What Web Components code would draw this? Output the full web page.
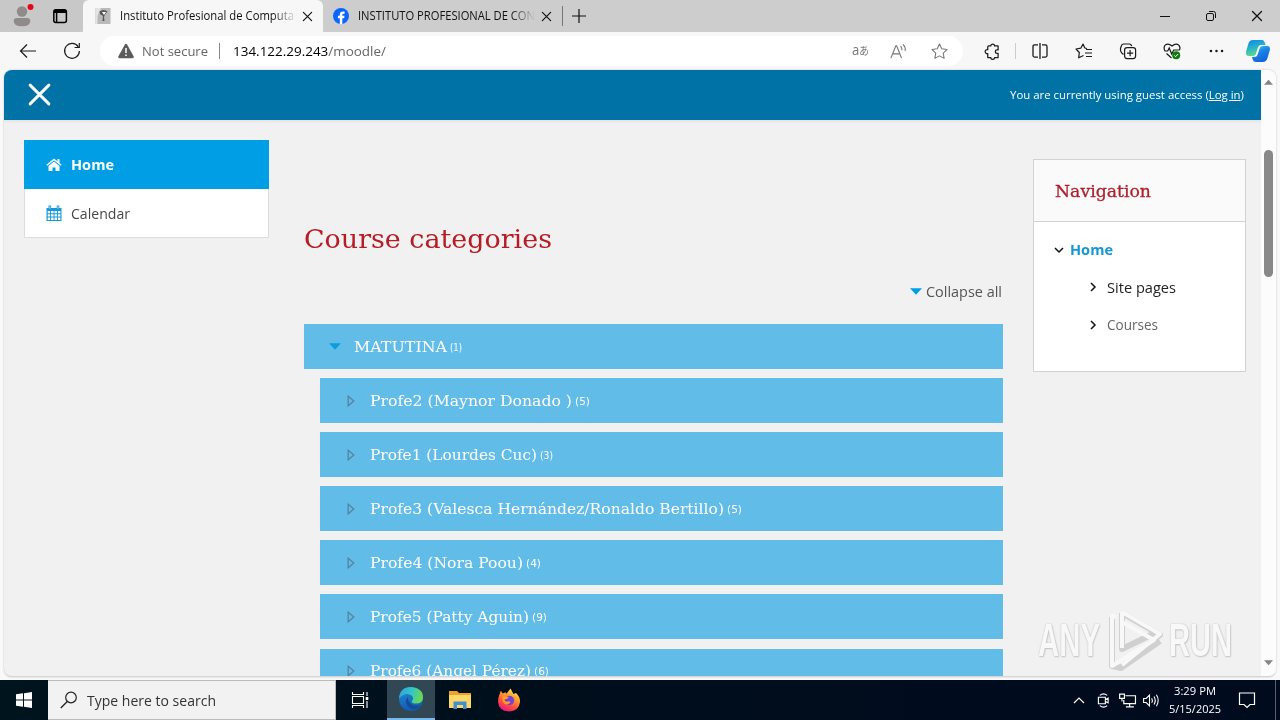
<!DOCTYPE html>
<html lang="en">
<head>
<meta charset="utf-8">
<title>Instituto Profesional de Computación</title>
<style>
html,body{margin:0;width:1280px;height:720px;overflow:hidden;background:#f7f7f7}
body{font-family:"Open Sans","Noto Sans",sans-serif;color:#222}
</style>
</head>
<body>
<desktop-screen></desktop-screen>
<script>
const ICONS = {
  back:['0 0 20 20','<path d="M18 10H3M9 3.5 2.5 10 9 16.5" fill="none" stroke="currentColor" stroke-width="1.2"/>'],
  reload:['0 0 20 20','<path d="M16.2 5.8A7.4 7.4 0 1 0 17.4 10M17.3 2v4.5h-4.7" fill="none" stroke="currentColor" stroke-width="1.2"/>'],
  warn:['0 0 16 16','<path d="M8 .8 Q8.7.8 9.1 1.5L15.6 13.2Q16.2 15.2 14.5 15.2H1.5Q-.2 15.2.4 13.2L6.9 1.5Q7.3.8 8 .8Z" fill="#5c5c5c"/><path d="M8 5v5M8 11.5v1.6" stroke="#fff" stroke-width="1.5"/>'],
  star:['0 0 20 20','<path d="m10 2.2 2.4 5 5.5.7-4 3.8 1 5.5L10 14.6l-4.9 2.6 1-5.5-4-3.8 5.5-.7Z" fill="none" stroke="currentColor" stroke-width="1.1" stroke-linejoin="round"/>'],
  aloud:['0 0 20 20','<path d="M2 17 7.2 4h.8l5.2 13M3.9 12.5h7.4M12.2 4.5q1.6 1.6 1.4 4.2M14.8 2.5q2.9 3 2.2 6.8" fill="none" stroke="currentColor" stroke-width="1.2"/>'],
  puzzle:['0 0 20 20','<path d="M6 4.2h2.2a2 2 0 0 1 4 0h3.7v4.1h-1.1a1.8 1.8 0 0 0 0 3.7h1.1v4.4h-3.7a2 2 0 0 1-4 0H5v-4.3a2.1 2.1 0 1 1 0-4V5.200q0-1 1-1Z" fill="none" stroke="currentColor" stroke-width="1.3" stroke-linejoin="round"/>'],
  split:['0 0 20 20','<path d="M8 3.900H4.500Q3 3.900 3 5.400v9.200q0 1.500 1.500 1.500H8M12 3.900h3.500Q17 3.900 17 5.400v9.200q0 1.500-1.500 1.500H12M10 2v16" fill="none" stroke="currentColor" stroke-width="1.3"/>'],
  favs:['0 0 20 20','<path d="M13 7.500 10.800 7 9 3 6.800 7.200 2 8l3.300 3.500-.6 5.300 4.800-2.300M12 8.500h6M11 12h7M12 15.500h6" fill="none" stroke="currentColor" stroke-width="1.2" stroke-linejoin="round"/>'],
  coll:['0 0 20 20','<path d="M5.500 13.500 3.800 12Q2 10 2.500 7.500L3.300 5Q3.700 3.400 5.300 3h6q2 0 2.300 2.200" fill="none" stroke="currentColor" stroke-width="1.2"/><rect x="6.600" y="6.600" width="11" height="11" rx="2.500" fill="none" stroke="currentColor" stroke-width="1.2"/><path d="M12.100 9v6.200M9 12.100h6.200" stroke="currentColor" stroke-width="1.2"/>'],
  heart:['0 0 20 20','<path d="M3 10Q1.200 6.500 3 4.400 6 1.700 10 5q4-3.300 7-.6 1.800 2.300.2 5M4.500 12.500l5 4.500M2.500 10h3.200l1.500-3 2.500 6 2-4h5" fill="none" stroke="currentColor" stroke-width="1.2"/><circle cx="14.200" cy="14.300" r="4" fill="#107c10"/><path d="m12.300 14.400 1.300 1.300 2.600-2.700" fill="none" stroke="#fff"/>'],
  dots:['0 0 20 20','<g fill="currentColor"><circle cx="3.500" cy="10" r="1.500"/><circle cx="10" cy="10" r="1.500"/><circle cx="16.500" cy="10" r="1.500"/></g>'],
  copilot:['0 0 26 26','<defs><linearGradient id="a" x2=".3" y2="1"><stop stop-color="#1781e8"/><stop offset=".55" stop-color="#25b7c8"/><stop offset="1" stop-color="#5fd68b"/></linearGradient><linearGradient id="b" x2=".5" y2="1"><stop stop-color="#53c9ef"/><stop offset=".5" stop-color="#1683e6"/><stop offset="1" stop-color="#1464dc"/></linearGradient></defs><path d="M8 2h9q2 0 2.700 2.200L20.500 7H16q-2.200 0-3 2.200l-2.300 7Q10 18 8 18H4Q0 18 1.200 13L3.600 5Q4.700 2 8 2Z" fill="url(#a)"/><path d="M18 8h4.300q3.500 0 2.400 4.600L22.500 20Q21.300 24 17.800 24H11q-2.600 0-3.200-2.300L7 19h2.300q2.600 0 3.300-2.200l2.300-7Q15.500 8 18 8Z" fill="url(#b)"/>'],
  person:['0 0 26 26','<circle cx="13" cy="8.500" r="5.200" fill="#8f8b88"/><path d="M4.700 18Q4.700 15 8 15h10q3.300 0 3.300 3 0 5.300-8.300 5.300T4.700 18Z" fill="#8f8b88"/><circle cx="21.500" cy="4" r="3" fill="#e3061c"/>'],
  tabs:['0 0 16 16','<rect x="1.800" y="1.800" width="12.600" height="12.600" rx="2" fill="none" stroke="#000" stroke-width="1.500"/><path d="M2 3.500h12" stroke="#000" stroke-width="3"/><path d="M4.600 4v10" stroke="#000" stroke-width="1.500"/>'],
  photo:['0 0 16 16','<rect x=".5" width="15" height="16" fill="#b9b9b9"/><path d="M1 0h5L2.500 8v8H.500V0Z" fill="#e3e3e3"/><path d="M4.500 3.500q4-3 8 0L10 6.500 9 9l.5 4h-2L8 8 5 6Z" fill="#555"/><path d="M7 4h4L9 7Z" fill="#fff"/>'],
  fb:['0 0 16 16','<circle cx="8" cy="8" r="8" fill="#0866ff"/><path d="M6.800 15.900v-5.600H4.900V7.800h1.900V6.700q0-3.300 3.300-3.300h1.500v2.300h-1q-1.300 0-1.300 1.200v.9h2.200l-.4 2.500H9.300v5.600Z" fill="#fff"/>'],
  x:['0 0 12 12','<path d="m1.500 1.500 9 9M10.500 1.500l-9 9" stroke="currentColor" stroke-width="var(--sw,1.300)" stroke-linecap="round"/>'],
  plus:['0 0 14 14','<path d="M7 0v14M0 7h14" stroke="currentColor" stroke-width="1.200"/>'],
  min:['0 0 12 12','<path d="M1 6.500h10" stroke="currentColor"/>'],
  restore:['0 0 12 12','<rect x="1.500" y="3.500" width="7" height="7" rx="1.500" fill="none" stroke="currentColor"/><path d="M4 1.500h4.500q2 0 2 2V8" fill="none" stroke="currentColor"/>'],
  home:['0 0 16 14','<path d="M8 3.600 13.500 8v4.400q0 .6-.6.6H9.500V9.500h-3V13H3.100q-.6 0-.6-.6V8Z" fill="currentColor"/><path d="M.800 7.300 8 1.500l7.200 5.800" fill="none" stroke="currentColor" stroke-width="1.400"/><path d="M11.500 1h2v4.500l-2-1.600Z" fill="currentColor"/>'],
  cal:['0 0 16 16','<path d="M.5 3h15v13H.5Z" fill="currentColor"/><path d="M3.800.4v4M12 .4v4" stroke="currentColor" stroke-width="2.600"/><path d="M3.800 1.200v2.500M12 1.200v2.500" stroke="#fff" stroke-width=".7"/><path d="M1.700 6h2.400v2.300H1.700zM5 6h2.600v2.300H5zM8.500 6h2.600v2.300H8.500zM12 6h2.400v2.300H12zM1.700 9.200h2.400v2.400H1.700zM5 9.200h2.600v2.400H5zM8.500 9.200h2.600v2.400H8.500zM12 9.200h2.400v2.400H12zM1.700 12.500h2.400V15H1.700zM5 12.500h2.600V15H5zM8.500 12.500h2.600V15H8.500zM12 12.500h2.400V15H12z" fill="#fff"/>'],
  down:['0 0 12 7','<path d="M0 .3h12L6 6.700Z" fill="currentColor"/>'],
  up:['0 0 10 6','<path d="M0 6h10L5 .5Z" fill="currentColor"/>'],
  tri:['0 0 8 12','<path d="M1.200 1.200 6.800 6 1.200 10.800Z" fill="none" stroke="#5186a3" stroke-width="1.300"/>'],
  chevd:['0 0 10 10','<path d="m1 3 4 4 4-4" fill="none" stroke="#111" stroke-width="1.500"/>'],
  chevr:['0 0 10 10','<path d="m3 1 4 4-4 4" fill="none" stroke="#111" stroke-width="1.500"/>'],
  win:['0 0 16 16','<path d="M0 2.300 7 1.300v6.200H0ZM8 1.200 16 0v7.500H8ZM0 8.500h7v6.200l-7-1ZM8 8.500h8V16l-8-1.200Z" fill="#fff"/>'],
  search:['0 0 18 18','<circle cx="11" cy="6.500" r="5.300" fill="none" stroke="#222" stroke-width="1.200"/><path d="m7.300 10.500-6.500 6.500" stroke="#222" stroke-width="1.300"/>'],
  task:['0 0 18 18','<path d="M1.500 1v2.500h11V1M1.500 17v-2.500h11V17M1.500 5.500h11v7h-11ZM16 1v4M16 10v7" fill="none" stroke="#fff" stroke-width="1.100"/><path d="M14.700 6h2.600v3h-2.600z" fill="#fff"/>'],
  edge:['0 0 26 26','<defs><linearGradient id="c" x2="1" y2=".25"><stop stop-color="#2d9fd9"/><stop offset=".55" stop-color="#34c4c9"/><stop offset="1" stop-color="#66d957"/></linearGradient><linearGradient id="d" x2=".3" y2="1"><stop stop-color="#258fd3"/><stop offset="1" stop-color="#105bb5"/></linearGradient></defs><circle cx="13" cy="13" r="12" fill="url(#d)"/><path d="M1 12.500Q1.800 1 13 1q12 1 12 10.500 0 6-7 6-4.300 0-4.300-2 .2-.8.9-1.500 1.200-2-.6-4.200Q7.500 5 1 12.500Z" fill="url(#c)"/><path d="M10 10.500Q5 17 12.500 22.500q5.500 1.800 10.300-3.500-4 2-8.600 0Q9 15.500 10 10.500Z" fill="#174a93"/>'],
  folder:['0 0 24 22','<path d="M1 2h8l2 2h12v15H1Z" fill="#e9a32a"/><path d="M1 6h22v13H1Z" fill="#ffd767"/><path d="M5.500 20v-7.500h13V20h-3.500v-4H9v4Z" fill="#3f91d4"/>'],
  fox:['0 0 24 24','<defs><linearGradient id="e" x1=".8" y1="0" x2=".3" y2="1"><stop stop-color="#fff44f"/><stop offset=".35" stop-color="#ffa42d"/><stop offset=".7" stop-color="#ff4b3f"/><stop offset="1" stop-color="#e31587"/></linearGradient></defs><path d="M2.300 7 3.800 2.800l2 2.700 2.600-1.300 1 1.500L13.500.5l3 5.500L19 5q4.500 4.300 4 9-1 9-11 9.500Q1.500 23 1 13.500 1 10 2.300 7Z" fill="url(#e)"/><circle cx="12.500" cy="12.500" r="4.700" fill="#7542d8"/><path d="M6 7.500 12 9l-2 2-3 .5q1 3 4.500 1.800 1.500 0 2 .8-2 3.500-6 2Q4 12.500 6 7.500Z" fill="#ff9a25"/>'],
  tup:['0 0 12 8','<path d="m1 7 5-5 5 5" fill="none" stroke="#fff" stroke-width="1.200"/>'],
  meet:['0 0 14 16','<path d="M3 2.500Q7-.7 11 2.500M3 13.500q4 3.200 8 0M1.500 4.500h7.500v7H1.500ZM9 7l3-1.500v5L9 9" fill="none" stroke="#fff" stroke-width="1.200"/>'],
  net:['0 0 16 14','<path d="M6 2.500h9.500v7.500H4.500V6.500M10 10v3M6.500 13h7.500M.600 1h4.500v4H.600ZM2.800 5v3" fill="none" stroke="#fff" stroke-width="1.100"/>'],
  vol:['0 0 17 14','<path d="M.6 5h2.600L6.500 1.700v10.600L3.200 9H.6ZM8.700 4.700q1.300 2.300 0 4.600M11 3q2.500 4 0 8M13.400 1.300q3.700 5.700 0 11.400" fill="none" stroke="#fff" stroke-width="1.100"/>'],
  note:['0 0 18 18','<path d="M1.500 2h15v11.500H12L9 16.500l-3-3H1.500Z" fill="none" stroke="#fff" stroke-width="1.200"/>'],
  play:['0 0 56 64','<g fill="none" stroke="#c9c9c9" stroke-width="6" stroke-linejoin="round"><path d="m15 5 38 22L14 59"/><path d="M15 5v36L48 25M5 9v49l9 2 39-27"/></g><g fill="none" stroke="#fafafa" stroke-width="4" stroke-linejoin="round"><path d="m15 4 38 22-38 31"/><path d="M15 4v36M15 14l32 18L5 58V8l4 1"/></g>']
};

function define(name, css, html, after) {
  customElements.define(name, class extends HTMLElement {
    constructor() {
      super();
      this.attachShadow({ mode: 'open' });
    }
    connectedCallback() {
      const body = typeof html === 'function' ? html(this) : html;
      this.shadowRoot.innerHTML = `<style>*{box-sizing:border-box}${css}</style>${body}`;
      if (after) after(this);
    }
  });
}

/* Whole screen: browser window above, taskbar below */
define('desktop-screen', `
:host{display:flex;flex-direction:column;width:1280px;height:720px;overflow:hidden;position:relative}
any-mark{position:absolute;left:1038px;top:608px}
`, `<tab-strip></tab-strip><tool-bar></tool-bar><page-frame></page-frame><task-bar></task-bar><any-mark></any-mark>`);

define('tab-strip', `
:host{display:flex;height:32px;flex:none;background:#cdcdcd;align-items:stretch;font-size:12px;color:#111}
.lead{width:83px;display:flex;align-items:center;padding-left:9px;gap:17px;background:#c8c8c8;border-radius:0 0 5px 0}
.plus{margin-left:9px;align-self:center}
.sep{width:1px;height:20px;background:#777;align-self:center;margin-left:1px}
.ctl{margin-left:auto;display:flex;align-items:center;gap:34px;padding-right:17px}
`, `<div class="lead"><ui-icon name="person" w="26" h="26"></ui-icon><ui-icon name="tabs" w="16" h="16"></ui-icon></div>
<browser-tab active icon="photo" w="174">Instituto Profesional de Computa</browser-tab>
<browser-tab icon="fb" w="177">INSTITUTO PROFESIONAL DE CON</browser-tab>
<span class="sep"></span><ui-icon class="plus" name="plus" w="14" h="14"></ui-icon>
<div class="ctl"><ui-icon name="min" w="12" h="12"></ui-icon><ui-icon name="restore" w="12" h="12"></ui-icon><ui-icon name="x" w="12" h="12"></ui-icon></div>`);

define('browser-tab', `
:host{display:flex;align-items:center;width:238px;padding:0 9px 0 10px;height:32px}
:host([active]){background:#f7f7f7;width:240px;padding:0 10px 0 12px;border-radius:6px 6px 0 0}
.t{margin-left:9px;flex:1;overflow:hidden;line-height:18px;-webkit-mask:linear-gradient(90deg,#000 153px,transparent 177px)}
`, h => `<ui-icon name="${h.getAttribute('icon')}" w="16" h="16"></ui-icon><div class="t"><fit-text w="${h.getAttribute('w')}"><slot></slot></fit-text></div><ui-icon name="x" w="11" h="11"></ui-icon>`);

define('tool-bar', `
:host{display:flex;height:38px;flex:none;background:#f7f7f7;align-items:center;padding-left:6px;color:#1b1b1b}
.b{width:44px;display:flex;justify-content:center;flex:none}
.pill{width:863px;height:30px;margin-left:6px;border-radius:15px;background:#fff;display:flex;align-items:center;padding-left:18px;font-size:13px;color:#666;line-height:18px}
.s{width:1px;height:16px;background:#888;margin:0 13px 0 11px}
.pill fit-text{margin-left:8px}.pill .u{margin:0}
.r{margin-left:auto;display:flex;align-items:center;padding-right:4px;color:#777}
.r .b{width:40px}.aa{font:15px/18px "Open Sans","Noto Sans CJK JP",sans-serif}.aa small{font-size:11px}
.v{width:1px;height:16px;background:#ccc;margin:0 2px 0 1px}
.ext{margin-left:7px;width:44px}.cp{width:40px}
b{font-weight:400;color:#000}
`, `<span class="b"><ui-icon name="back" w="20" h="20"></ui-icon></span><span class="b"><ui-icon name="reload" w="20" h="20"></ui-icon></span>
<div class="pill"><ui-icon name="warn" w="16" h="16"></ui-icon><fit-text w="66">Not secure</fit-text><span class="s"></span><fit-text class="u" w="153"><b>134.122.29.243</b>/moodle/</fit-text>
<div class="r"><span class="b aa" style="width:38px"><fit-text style="margin:0 0 2px 2px" w="17">a<small>あ</small></fit-text></span><span class="b" style="width:41px"><ui-icon name="aloud" w="19" h="19"></ui-icon></span><span class="b"><ui-icon name="star" w="19" h="19"></ui-icon></span></div></div>
<span class="b ext"><ui-icon name="puzzle" w="19" h="19"></ui-icon></span><span class="v"></span>
${['split','favs','coll','heart','dots'].map((n, i) => `<span class="b"><ui-icon name="${n}" w="${n === 'dots' ? 17 : 20}" h="20"></ui-icon></span>`).join('')}
<span class="b cp"><ui-icon name="copilot" w="26" h="26"></ui-icon></span>`);

define('page-frame', `
:host{display:block;height:610px;flex:none;padding:0 4px 4px;background:#f9f9f9}
.f{height:607px;border-radius:8px;overflow:hidden;display:flex;background:#f1f1f1;border-bottom:1px solid #d6d6d6;box-shadow:0 0 2px #bbb}
.p{width:1257px;display:flex;flex-direction:column}
.bar{height:50px;flex:none;background:#0072a6;color:#fff;display:flex;align-items:center;justify-content:space-between;padding:0 17px 2px 23px;font-size:11.500px;box-shadow:0 2px 2px #e3e5ea}
.bar ui-icon{--sw:1.400}
.c{flex:1;display:grid;grid-template-columns:245px 699px 213px;padding-left:20px;column-gap:0;min-height:0}
side-menu{margin-top:20px}course-list{margin-left:35px}nav-block{margin:39px 0 0 65px}
`, `<div class="f"><div class="p"><div class="bar"><ui-icon name="x" w="25" h="25"></ui-icon><fit-text w="234">You are currently using guest access (<u>Log in</u>)</fit-text></div>
<div class="c"><side-menu></side-menu><course-list></course-list><nav-block></nav-block></div></div><scroll-bar></scroll-bar></div>`);

define('scroll-bar', `
:host{display:flex;flex-direction:column;align-items:center;width:15px;background:#fcfcfc;color:#858585;padding:9px 0 10px}
.t{width:9px;height:127px;background:#888;border-radius:5px;margin:65px 0 auto}
.d{transform:rotate(180deg)}
`, `<ui-icon name="up" w="9" h="6"></ui-icon><div class="t"></div><ui-icon class="d" name="up" w="9" h="6"></ui-icon>`);

define('side-menu', `
:host{display:block;font-size:14px}
div{height:49px;display:flex;align-items:center;gap:9px;background:#fff;border:1px solid #ddd;border-top:0;padding-left:21px;color:#484848}
.a{background:#009ee5;color:#fff;font-weight:700;border:0;padding-left:22px}
.i{color:#1599d9}
`, `<div class="a"><ui-icon name="home" w="16" h="14"></ui-icon><fit-text w="43">Home</fit-text></div><div><ui-icon class="i" name="cal" w="16" h="16"></ui-icon><fit-text w="59">Calendar</fit-text></div>`);

define('course-list', `
:host{display:block;width:699px;color:#555}
h2{margin:98px 0 0;height:42px;font:400 26px/42px "DejaVu Serif",serif;color:#b71c25}
.all{display:flex;justify-content:flex-end;align-items:center;height:24px;margin:19px 0 21px;gap:4px;font-size:14px;padding-right:1px}
.all ui-icon{color:#009fe3}
.l{display:flex;flex-direction:column;gap:9.100px}
`, `<h2><fit-text w="248">Course categories</fit-text></h2>
<div class="all"><ui-icon name="down" w="12" h="7"></ui-icon><fit-text w="76">Collapse all</fit-text></div>
<div class="l"><course-row open w="93" n="1" nw="12">MATUTINA</course-row>
<course-row w="202" n="5">Profe2 (Maynor Donado )</course-row>
<course-row w="167" n="3" nw="13">Profe1 (Lourdes Cuc)</course-row>
<course-row w="354" n="5">Profe3 (Valesca Hernández/Ronaldo Bertillo)</course-row>
<course-row w="153" n="4">Profe4 (Nora Poou)</course-row>
<course-row w="159" n="9">Profe5 (Patty Aguin)</course-row>
<course-row w="161" n="6">Profe6 (Angel Pérez)</course-row></div>`);

define('course-row', `
:host{display:flex;height:45px;flex:none;background:#62bce8;margin-left:16px;align-items:center;color:#fff;padding-left:27px;font:15.500px/24px "DejaVu Serif",serif}
:host([open]){margin-left:0;padding-left:25px;--i:13px}
ui-icon{color:#0d9ddd;margin-right:var(--i,15px)}
.n{font:11px/24px "DejaVu Sans",sans-serif;margin:2px 0 0 3px}
`, h => `<ui-icon name="${h.hasAttribute('open') ? 'down' : 'tri'}" w="${h.hasAttribute('open') ? 12 : 8}" h="${h.hasAttribute('open') ? 7 : 12}"></ui-icon><fit-text w="${h.getAttribute('w')}"><slot></slot></fit-text><fit-text class="n" w="${h.getAttribute('nw') || 15}">(${h.getAttribute('n')})</fit-text>`);

define('nav-block', `
:host{display:block;width:213px;height:213px;background:#fff;border:1px solid #d2d2d2;font-size:14px}
h3{margin:0;height:62px;background:#fafafa;border-bottom:1px solid #d2d2d2;padding-left:21px;font:400 17px/62px "DejaVu Serif",serif;color:#ad1f2b;-webkit-text-stroke:.3px}
div{height:37.500px;display:flex;align-items:center;padding-left:54px;gap:9px;color:#222}
.h{color:#1597d6;font-weight:700;padding-left:20px;gap:6px;margin-top:9px}.g{color:#666}
`, `<h3><fit-text w="96">Navigation</fit-text></h3><div class="h"><ui-icon name="chevd" w="10" h="10"></ui-icon><fit-text w="43">Home</fit-text></div>
<div><ui-icon name="chevr" w="10" h="10"></ui-icon><fit-text w="69">Site pages</fit-text></div><div class="g"><ui-icon name="chevr" w="10" h="10"></ui-icon><fit-text w="51">Courses</fit-text></div>`);

define('task-bar', `
:host{display:flex;height:40px;flex:none;background:linear-gradient(90deg,#00141d,#000d1c 50%,#000b1e);align-items:center;color:#fff;position:relative}
.s{width:48px;display:flex;justify-content:center}
.q{width:288px;height:40px;background:#f2f2f2;border:1px solid #bbb;border-left:0;display:flex;align-items:center;gap:9px;padding-left:12px;color:#333;font-size:14px}
.a{width:48px;height:40px;display:flex;align-items:center;justify-content:center}
.e{margin:0 1px 0 3px;background:#314753;border-bottom:2px solid #76b9ed}
.tray{margin-left:auto;display:flex;align-items:center;height:40px}
.c{width:52px;margin:0 17px 0 9px;display:flex;flex-direction:column;align-items:center;font-size:11.500px;line-height:18px}
.end{width:1px;height:40px;background:#536070;margin-left:19px;margin-right:4px}
`, `<span class="s"><ui-icon name="win" w="16" h="16"></ui-icon></span><div class="q"><ui-icon name="search" w="18" h="18"></ui-icon><fit-text w="129">Type here to search</fit-text></div>
<span class="a"><ui-icon name="task" w="18" h="18"></ui-icon></span><span class="a e"><ui-icon name="edge" w="26" h="26"></ui-icon></span><span class="a"><ui-icon name="folder" w="24" h="22"></ui-icon></span><span class="a" style="margin-left:1px"><ui-icon name="fox" w="24" h="24"></ui-icon></span>
<div class="tray"><ui-icon name="tup" w="12" h="8"></ui-icon><ui-icon style="margin-left:12px" name="meet" w="13" h="17"></ui-icon><ui-icon style="margin-left:9px" name="net" w="17" h="15"></ui-icon><ui-icon style="margin-left:7px" name="vol" w="17" h="15"></ui-icon>
<div class="c"><fit-text w="42">3:29 PM</fit-text><fit-text w="52">5/15/2025</fit-text></div><ui-icon name="note" w="18" h="18"></ui-icon><span class="end"></span></div>`);

define('any-mark', `
:host{display:flex;align-items:center;width:197px;height:64px;color:#fafafa;font:700 46px/64px "Liberation Sans",sans-serif;text-shadow:0 0 2px #aaa,1px 1px 2px #bbb;opacity:.8}
ui-icon{margin:0 6px 0 7px}
`, `<fit-text w="62">ANY</fit-text><ui-icon name="play" w="56" h="64"></ui-icon><fit-text w="63">RUN</fit-text>`);

define('ui-icon', `:host{display:inline-block;flex:none;line-height:0}svg{display:block;overflow:visible}`, h => {
  const [box, art] = ICONS[h.getAttribute('name')];
  return `<svg width="${h.getAttribute('w')}" height="${h.getAttribute('h')}" viewBox="${box}">${art}</svg>`;
});

/* One line of text condensed or widened to the width of its slot */
define('fit-text', `:host{display:inline-block;white-space:nowrap;flex:none}span{display:inline-block;transform-origin:0 50%}`, `<span><slot></slot></span>`, h => {
  const w = +h.getAttribute('w'), s = h.shadowRoot.querySelector('span');
  const n = s.getBoundingClientRect().width;
  h.style.width = w + 'px';
  if (n) s.style.transform = `scaleX(${w / n})`;
});
</script>
</body>
</html>
